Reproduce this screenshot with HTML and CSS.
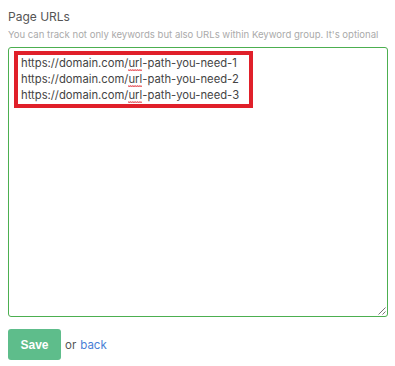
FILE: index.html
```html
<!DOCTYPE html>
<html>
<head>
<meta charset="utf-8">
<link rel="stylesheet" href="styles.css">
</head>
<body>
<div class="form">
  <div class="label">Page URLs</div>
  <div class="hint">You can track not only keywords but also URLs within Keyword group. It's optional</div>
  <div class="textarea">
    <div class="highlight">
      <div class="line">https://domain.com/<span class="sp">url<svg class="wave" viewBox="0 0 16 3" preserveAspectRatio="none"><polyline points="0,2.5 1,0.5 2,2.5 3,0.5 4,2.5 5,0.5 6,2.5 7,0.5 8,2.5 9,0.5 10,2.5 11,0.5 12,2.5 13,0.5 14,2.5 15,0.5 16,2.5" fill="none" stroke="#e0303a" stroke-width="0.8"/></svg></span>-path-you-need-1</div>
      <div class="line">https://domain.com/<span class="sp">url<svg class="wave" viewBox="0 0 16 3" preserveAspectRatio="none"><polyline points="0,2.5 1,0.5 2,2.5 3,0.5 4,2.5 5,0.5 6,2.5 7,0.5 8,2.5 9,0.5 10,2.5 11,0.5 12,2.5 13,0.5 14,2.5 15,0.5 16,2.5" fill="none" stroke="#e0303a" stroke-width="0.8"/></svg></span>-path-you-need-2</div>
      <div class="line">https://domain.com/<span class="sp">url<svg class="wave" viewBox="0 0 16 3" preserveAspectRatio="none"><polyline points="0,2.5 1,0.5 2,2.5 3,0.5 4,2.5 5,0.5 6,2.5 7,0.5 8,2.5 9,0.5 10,2.5 11,0.5 12,2.5 13,0.5 14,2.5 15,0.5 16,2.5" fill="none" stroke="#e0303a" stroke-width="0.8"/></svg></span>-path-you-need-3</div>
    </div>
    <svg class="grip" width="9" height="9" viewBox="0 0 9 9"><path d="M8.5 1.5L1.5 8.5M8.5 5.5L5.5 8.5" stroke="#777" stroke-width="1"/></svg>
  </div>
  <div class="actions">
    <button class="save">Save</button>
    <span class="or">or</span>
    <a class="back" href="#">back</a>
  </div>
</div>
</body>
</html>
```
FILE: styles.css
```css
html, body { margin: 0; padding: 0; background: #fff; }
body { font-family: Inter, "Noto Sans", sans-serif; }
.form { padding: 9px 7px 0 8px; }
.label { font-size: 12px; line-height: 16px; color: #555; }
.hint { font-size: 9.55px; line-height: 14px; color: #aaa; margin-top: 3px; white-space: nowrap; }
.textarea {
  position: relative;
  margin-top: 5px;
  height: 265px;
  border: 1px solid #4caf50;
  border-radius: 3px;
  padding: 3px 5px 0;
}
.highlight {
  display: inline-block;
  border: 4px solid #e0202a;
  padding: 0 10px 0 3px;
}
.line { font-size: 11.25px; line-height: 16.2px; color: #444; }
.sp { position: relative; }
.wave { position: absolute; left: 0; right: 0; bottom: -1px; width: 100%; height: 2.5px; }
.grip { position: absolute; right: 1px; bottom: 1px; }
.actions { display: flex; align-items: center; margin-top: 12px; }
.save {
  width: 53px; height: 31px;
  background: #5ebd8b; color: #fff;
  border: none; border-radius: 3px;
  font-family: "Liberation Sans", Arial, sans-serif;
  font-weight: bold; font-size: 12px;
  padding: 0;
}
.or { margin-left: 4px; font-size: 11.5px; color: #555; }
.back { margin-left: 4px; font-size: 11.5px; color: #4a7fd6; text-decoration: none; }
```
